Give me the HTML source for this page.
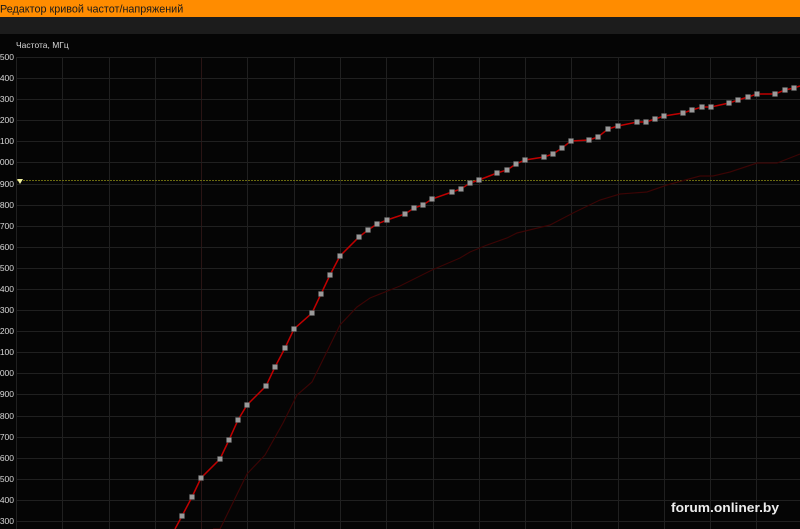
<!DOCTYPE html>
<html><head><meta charset="utf-8"><style>
body{margin:0;width:800px;height:529px;overflow:hidden;background:#050505;font-family:"Liberation Sans",sans-serif}
</style></head><body>
<svg width="800" height="529" xmlns="http://www.w3.org/2000/svg" style="position:absolute;left:0;top:0">
<rect x="0" y="0" width="800" height="529" fill="#050505"/>
<rect x="0" y="0" width="800" height="17" fill="#ff8c00"/>
<rect x="0" y="17" width="800" height="17" fill="#1c1c1c"/>
<text x="0" y="12.5" font-size="10.8" fill="#1a1a1a" font-family="Liberation Sans, sans-serif">Редактор кривой частот/напряжений</text>
<text x="16" y="48" font-size="8.5" fill="#d8d8d8" font-family="Liberation Sans, sans-serif">Частота, МГц</text>
<g stroke="#202020" stroke-width="1">
<line x1="16.5" y1="57" x2="16.5" y2="529"/>
<line x1="62.5" y1="57" x2="62.5" y2="529"/>
<line x1="109.5" y1="57" x2="109.5" y2="529"/>
<line x1="155.5" y1="57" x2="155.5" y2="529"/>
<line x1="201.5" y1="57" x2="201.5" y2="529" stroke="#2a1414"/>
<line x1="247.5" y1="57" x2="247.5" y2="529"/>
<line x1="294.5" y1="57" x2="294.5" y2="529"/>
<line x1="340.5" y1="57" x2="340.5" y2="529"/>
<line x1="386.5" y1="57" x2="386.5" y2="529"/>
<line x1="433.5" y1="57" x2="433.5" y2="529"/>
<line x1="479.5" y1="57" x2="479.5" y2="529"/>
<line x1="525.5" y1="57" x2="525.5" y2="529"/>
<line x1="571.5" y1="57" x2="571.5" y2="529"/>
<line x1="618.5" y1="57" x2="618.5" y2="529"/>
<line x1="664.5" y1="57" x2="664.5" y2="529"/>
<line x1="710.5" y1="57" x2="710.5" y2="529"/>
<line x1="756.5" y1="57" x2="756.5" y2="529"/>
</g>
<g stroke="#202020" stroke-width="1">
<line x1="16" y1="57.5" x2="800" y2="57.5"/><line x1="16" y1="78.5" x2="800" y2="78.5"/><line x1="16" y1="99.5" x2="800" y2="99.5"/><line x1="16" y1="120.5" x2="800" y2="120.5"/><line x1="16" y1="141.5" x2="800" y2="141.5"/><line x1="16" y1="162.5" x2="800" y2="162.5"/><line x1="16" y1="184.5" x2="800" y2="184.5"/><line x1="16" y1="205.5" x2="800" y2="205.5"/><line x1="16" y1="226.5" x2="800" y2="226.5"/><line x1="16" y1="247.5" x2="800" y2="247.5"/><line x1="16" y1="268.5" x2="800" y2="268.5"/><line x1="16" y1="289.5" x2="800" y2="289.5"/><line x1="16" y1="310.5" x2="800" y2="310.5"/><line x1="16" y1="331.5" x2="800" y2="331.5"/><line x1="16" y1="352.5" x2="800" y2="352.5"/><line x1="16" y1="373.5" x2="800" y2="373.5"/><line x1="16" y1="394.5" x2="800" y2="394.5"/><line x1="16" y1="416.5" x2="800" y2="416.5"/><line x1="16" y1="437.5" x2="800" y2="437.5"/><line x1="16" y1="458.5" x2="800" y2="458.5"/><line x1="16" y1="479.5" x2="800" y2="479.5"/><line x1="16" y1="500.5" x2="800" y2="500.5"/><line x1="16" y1="521.5" x2="800" y2="521.5"/>
</g>
<g font-size="8.5" fill="#d8d8d8" text-anchor="end" font-family="Liberation Sans, sans-serif">
<text x="14" y="60">500</text><text x="14" y="81">400</text><text x="14" y="102">300</text><text x="14" y="123">200</text><text x="14" y="144">100</text><text x="14" y="165">000</text><text x="14" y="187">900</text><text x="14" y="208">800</text><text x="14" y="229">700</text><text x="14" y="250">600</text><text x="14" y="271">500</text><text x="14" y="292">400</text><text x="14" y="313">300</text><text x="14" y="334">200</text><text x="14" y="355">100</text><text x="14" y="376">000</text><text x="14" y="397">900</text><text x="14" y="419">800</text><text x="14" y="440">700</text><text x="14" y="461">600</text><text x="14" y="482">500</text><text x="14" y="503">400</text><text x="14" y="524">300</text>
</g>
<line x1="17" y1="180.5" x2="800" y2="180.5" stroke="#6a6a10" stroke-width="1" stroke-dasharray="2,1"/>
<polygon points="17,179 23,179 20,184" fill="#f0f0a0"/>
<polyline fill="none" stroke="#3a0505" stroke-width="1.2" points="213,529 220,529 247,474 265,455 283,423 297,395 312,382 340,325 357,307 370,298 400,286 432,270 460,258 470,252 487,245 507,238 517,233 550,225 575,212 600,200 620,194 647,192 667,185 700,176 713,176 730,172 757,163 777,163 800,154"/>
<polyline fill="none" stroke="#c00000" stroke-width="1.5" points="175,529 182,516 192,497 201,478 220,459 229,440 238,420 247,405 266,386 275,367 285,348 294,329 312,313 321,294 330,275 340,256 359,237 368,230 377,224 387,220 405,214 414,208 423,205 432,199 452,192 461,189 470,183 479,180 497,173 507,170 516,164 525,160 544,157 553,154 562,148 571,141 589,140 598,137 608,129 618,126 637,122 646,122 655,119 664,116 683,113 692,110 702,107 711,107 729,103 738,100 748,97 757,94 775,94 785,90 794,88 800,86"/>
<g fill="#9a9a9a" stroke="#555" stroke-width="0.5">
<rect x="179.5" y="513.5" width="5" height="5"/><rect x="189.5" y="494.5" width="5" height="5"/><rect x="198.5" y="475.5" width="5" height="5"/><rect x="217.5" y="456.5" width="5" height="5"/><rect x="226.5" y="437.5" width="5" height="5"/><rect x="235.5" y="417.5" width="5" height="5"/><rect x="244.5" y="402.5" width="5" height="5"/><rect x="263.5" y="383.5" width="5" height="5"/><rect x="272.5" y="364.5" width="5" height="5"/><rect x="282.5" y="345.5" width="5" height="5"/><rect x="291.5" y="326.5" width="5" height="5"/><rect x="309.5" y="310.5" width="5" height="5"/><rect x="318.5" y="291.5" width="5" height="5"/><rect x="327.5" y="272.5" width="5" height="5"/><rect x="337.5" y="253.5" width="5" height="5"/><rect x="356.5" y="234.5" width="5" height="5"/><rect x="365.5" y="227.5" width="5" height="5"/><rect x="374.5" y="221.5" width="5" height="5"/><rect x="384.5" y="217.5" width="5" height="5"/><rect x="402.5" y="211.5" width="5" height="5"/><rect x="411.5" y="205.5" width="5" height="5"/><rect x="420.5" y="202.5" width="5" height="5"/><rect x="429.5" y="196.5" width="5" height="5"/><rect x="449.5" y="189.5" width="5" height="5"/><rect x="458.5" y="186.5" width="5" height="5"/><rect x="467.5" y="180.5" width="5" height="5"/><rect x="476.5" y="177.5" width="5" height="5"/><rect x="494.5" y="170.5" width="5" height="5"/><rect x="504.5" y="167.5" width="5" height="5"/><rect x="513.5" y="161.5" width="5" height="5"/><rect x="522.5" y="157.5" width="5" height="5"/><rect x="541.5" y="154.5" width="5" height="5"/><rect x="550.5" y="151.5" width="5" height="5"/><rect x="559.5" y="145.5" width="5" height="5"/><rect x="568.5" y="138.5" width="5" height="5"/><rect x="586.5" y="137.5" width="5" height="5"/><rect x="595.5" y="134.5" width="5" height="5"/><rect x="605.5" y="126.5" width="5" height="5"/><rect x="615.5" y="123.5" width="5" height="5"/><rect x="634.5" y="119.5" width="5" height="5"/><rect x="643.5" y="119.5" width="5" height="5"/><rect x="652.5" y="116.5" width="5" height="5"/><rect x="661.5" y="113.5" width="5" height="5"/><rect x="680.5" y="110.5" width="5" height="5"/><rect x="689.5" y="107.5" width="5" height="5"/><rect x="699.5" y="104.5" width="5" height="5"/><rect x="708.5" y="104.5" width="5" height="5"/><rect x="726.5" y="100.5" width="5" height="5"/><rect x="735.5" y="97.5" width="5" height="5"/><rect x="745.5" y="94.5" width="5" height="5"/><rect x="754.5" y="91.5" width="5" height="5"/><rect x="772.5" y="91.5" width="5" height="5"/><rect x="782.5" y="87.5" width="5" height="5"/><rect x="791.5" y="85.5" width="5" height="5"/>
</g>
<text x="671" y="512" font-size="13" font-weight="bold" fill="#eeeeee" textLength="108" lengthAdjust="spacingAndGlyphs" font-family="Liberation Sans, sans-serif">forum.onliner.by</text>
</svg>
</body></html>
